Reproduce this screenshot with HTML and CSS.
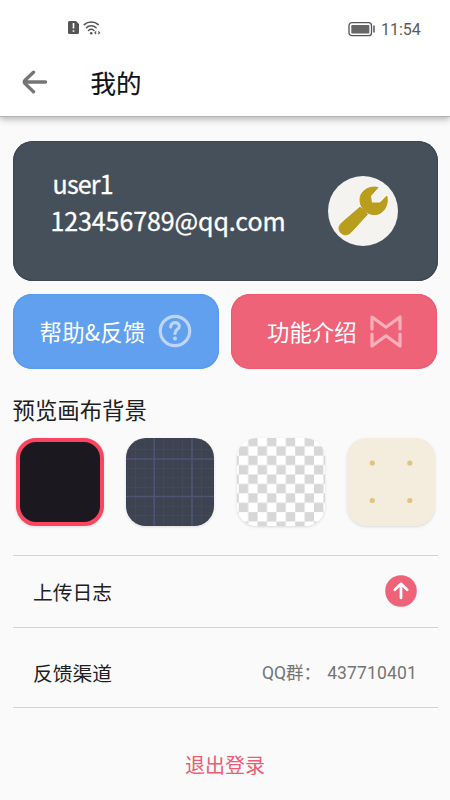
FILE: index.html
```html
<!DOCTYPE html>
<html lang="zh-CN">
<head>
<meta charset="utf-8">
<meta name="viewport" content="width=device-width, initial-scale=1">
<title>我的</title>
<link rel="stylesheet" href="styles.css">
</head>
<body>
<header class="top">
  <div class="status">
    <svg class="signals" width="36" height="18" viewBox="0 0 36 18">
      <path fill="#555" d="M2.500 2H9l3 3v8.500a1.500 1.500 0 0 1-1.500 1.500h-8A1.500 1.500 0 0 1 1 13.500v-10A1.500 1.500 0 0 1 2.500 2z"/>
      <path stroke="#fff" stroke-width="1.700" d="M6.500 4v5.500M6.500 11.200v1.600"/>
      <g fill="none" stroke="#555" stroke-width="1.500" stroke-linecap="round"><path d="M17.200 5.600C21 2 27.500 2 31.300 5.600M19.400 8.700c2.800-2.600 7-2.600 9.700 0M21.500 11.500c1.700-1.500 3.800-1.500 5.500 0"/></g>
      <circle cx="24.200" cy="14.200" r="1.300" fill="#555"/>
      <path d="M29.200 12.500l-1.300 1.300 1.300 1.300M31.300 12.500l1.300 1.300-1.300 1.300" fill="none" stroke="#555" stroke-width="1.100"/>
    </svg>
    <div class="power">
      <svg width="28" height="16" viewBox="0 0 28 16"><rect x="1" y="1.700" width="22.500" height="13" rx="3" fill="none" stroke="#555" stroke-width="1.300"/><rect x="3.300" y="4" width="18" height="8.500" rx=".8" fill="#666"/><path d="M26 4.500v7" stroke="#555" stroke-width="1.500"/></svg>
      <span class="clock">11:54</span>
    </div>
  </div>
  <div class="bar">
    <svg width="26" height="26" viewBox="0 0 26 26" fill="none" stroke="#757575" stroke-width="3.400" stroke-linecap="round" stroke-linejoin="round"><path d="M11.500 3.200 3.300 10.900q-1.900 2 0 4L11.500 22.800M3 13h20.500"/></svg>
    <h1>我的</h1>
  </div>
</header>
<main>
  <section class="profile">
    <div class="account"><p class="name">user1</p><p class="mail">123456789@qq.com</p></div>
    <svg class="avatar" width="70" height="70" viewBox="0 0 70 70">
      <circle cx="35" cy="35" r="35" fill="#f4f3ef"/>
      <g fill="#b99d1c" stroke="#b99d1c" stroke-width="1" stroke-linejoin="round">
        <path d="M50 11.500C41 9.500 32 15 32 23.500c0 9 6.500 15 14.500 15.200 8.500 0 14.500-9 12.300-18.700L52 27h-8.500l-1-7z"/>
        <path d="M32 31.200 39.500 38.300 23.500 55.700c-3.500 4-7.800 3.800-10.400 1.300-3-3-2.700-7 .5-10z"/>
      </g>
    </svg>
  </section>
  <div class="actions">
    <a class="action help"><span>帮助&amp;反馈</span>
      <svg width="34" height="34" viewBox="0 0 34 34" fill="none" stroke="#bcd5f8" stroke-width="3.200" stroke-linecap="round" stroke-linejoin="round"><circle cx="17" cy="17" r="14.700"/><path d="M12.700 13c0-6 8.600-5.600 8.600-.8 0 3.500-4.300 2.800-4.300 7.300"/><circle cx="17" cy="24.500" r="2" fill="#bcd5f8" stroke="none"/></svg>
    </a>
    <a class="action intro"><span>功能介绍</span>
      <svg width="34" height="34" viewBox="0 0 34 34" fill="none" stroke="#f9afbb" stroke-width="3.200" stroke-linecap="round" stroke-linejoin="round"><path d="M3 15V3l14 10.200L31 3v12M3 20v12l14-10.200L31 32V20"/></svg>
    </a>
  </div>
  <h2>预览画布背景</h2>
  <div class="swatches">
    <div class="swatch dark"></div>
    <div class="swatch grid">
      <svg width="88" height="88" viewBox="0 0 88 88"><path stroke="#434956" d="M9.500 0v88M19 0v88M37.500 0v88M47 0v88M56.500 0v88M75.500 0v88M0 11.500h88M0 30.500h88M0 40h88M0 49.500h88M0 68h88M0 77.500h88"/><path stroke="#4f5674" stroke-width="1.500" d="M28.200 0v88M66 0v88M0 21h88M0 58.500h88"/></svg>
    </div>
    <div class="swatch checks">
      <svg width="88" height="88" viewBox="0 0 88 88"><defs><pattern id="checks" x="1.800" y="-1.100" width="18.800" height="18.800" patternUnits="userSpaceOnUse"><path fill="#d7d7d7" d="M9.400 0h9.400v9.400H9.400zM0 9.400h9.400v9.400H0z"/></pattern></defs><rect width="88" height="88" fill="#fff"/><rect width="88" height="88" fill="url(#checks)"/></svg>
    </div>
    <div class="swatch dots">
      <svg width="88" height="88" viewBox="0 0 88 88" fill="#dfc47e"><circle cx="25.300" cy="25" r="2.600"/><circle cx="62.800" cy="25" r="2.600"/><circle cx="25.300" cy="62.500" r="2.600"/><circle cx="62.800" cy="62.500" r="2.600"/></svg>
    </div>
  </div>
  <div class="rows">
    <div class="row upload"><span>上传日志</span>
      <svg width="32" height="32" viewBox="0 0 32 32"><circle cx="16" cy="16" r="15.800" fill="#ee6378"/><path d="M16 23V9.500M9.800 14.700 16 8.800l6.200 5.900" fill="none" stroke="#fff" stroke-width="2.700" stroke-linecap="round" stroke-linejoin="round"/></svg>
    </div>
    <div class="row contact"><span>反馈渠道</span><div class="group"><span>QQ群：</span><span class="number">437710401</span></div></div>
  </div>
  <a class="logout">退出登录</a>
</main>
</body>
</html>
```
FILE: styles.css
```css
* { box-sizing: border-box; }
body {
  margin: 0;
  height: 800px;
  overflow: hidden;
  background: #fafafa;
  color: #202020;
  font-family: Roboto, "Noto Sans CJK SC", sans-serif;
}
h1, h2, p { margin: 0; }
svg { display: block; flex: none; }

.top {
  position: relative;
  height: 117px;
  background: #fff;
  border-bottom: 1px solid #b4b4b4;
  box-shadow: 0 2px 7px rgba(0, 0, 0, .3);
}
.status {
  display: flex;
  justify-content: space-between;
  height: 46px;
  padding: 19px 31px 0 66.500px;
}
.power { display: flex; gap: 5px; height: 20px; align-items: center; }
.clock { font-size: 16px; line-height: 18px; color: #5a5a5a; width: 38px; padding-top: 2px; white-space: nowrap; }
.bar { display: flex; align-items: center; gap: 42.500px; height: 71px; padding-left: 22px; }
h1 { font: 400 25.5px/36px "Noto Sans CJK SC", sans-serif; color: #11111a; -webkit-text-stroke: .2px; }

main { padding: 24px 12.500px 0; }
.profile {
  display: flex;
  justify-content: space-between;
  height: 140px;
  padding: 35px 39.500px 0 38px;
  border-radius: 20px;
  background: #46505b;
  box-shadow: inset 0 0 1px 1px #3b4655;
}
.account { color: #fff; font-family: "Noto Sans CJK SC", sans-serif; font-size: 25px; font-weight: 400; -webkit-text-stroke: .3px #fff; white-space: nowrap; }
.name { padding-left: 2px; line-height: 14px; letter-spacing: -.8px; }
.mail { margin-top: 22px; line-height: 16px; letter-spacing: -.1px; }

.actions { display: grid; grid-template-columns: 206px 206px; gap: 12.500px; margin-top: 12.500px; }
.action {
  display: flex;
  align-items: center;
  height: 75px;
  border-radius: 19px;
  color: #fff;
  font-size: 22.400px;
  font-family: "Noto Sans CJK SC", sans-serif;
  white-space: nowrap;
}
.action svg { margin-left: auto; }
.help { padding: 0 27px; background: #619fef; box-shadow: inset 0 0 1px 1px #5799ef; }
.help span { letter-spacing: .25px; }
.intro { padding: 0 34px 0 36px; background: #ee6378; box-shadow: inset 0 0 1px 1px #ee586e; }
h2 { margin-top: 24px; font: 400 22.400px/32px "Noto Sans CJK SC", sans-serif; }

.swatches { display: flex; justify-content: space-between; margin: 13px 2px 0 3px; }
.swatch {
  width: 88px;
  height: 88px;
  border-radius: 20px;
  overflow: hidden;
  box-shadow: 0 1px 3px rgba(0, 0, 0, .13);
}
.dark { background: #1b191f; border: 4px solid #fb4560; }
.grid { background: #3d4350; }
.checks { background: #fff; }
.dots { background: #f4ecdc; }

.rows { margin-top: 29px; border-top: 1px solid #d3d3d3; font-size: 19.800px; font-family: "Noto Sans CJK SC", sans-serif; }
.row {
  display: flex;
  align-items: center;
  justify-content: space-between;
  padding: 0 20.500px;
  border-bottom: 1px solid #d3d3d3;
}
.upload { height: 72px; }
.contact { height: 80px; padding-top: 11px; }
.group { display: flex; align-items: baseline; gap: 6px; color: #757575; font-family: Roboto, "Noto Sans CJK SC", sans-serif; font-size: 17.500px; line-height: 24px; }
.number { letter-spacing: .15px; }
.logout { display: block; margin-top: 42px; text-align: center; color: #ec5c73; font: 20px/30px "Noto Sans CJK SC", sans-serif; }
```
